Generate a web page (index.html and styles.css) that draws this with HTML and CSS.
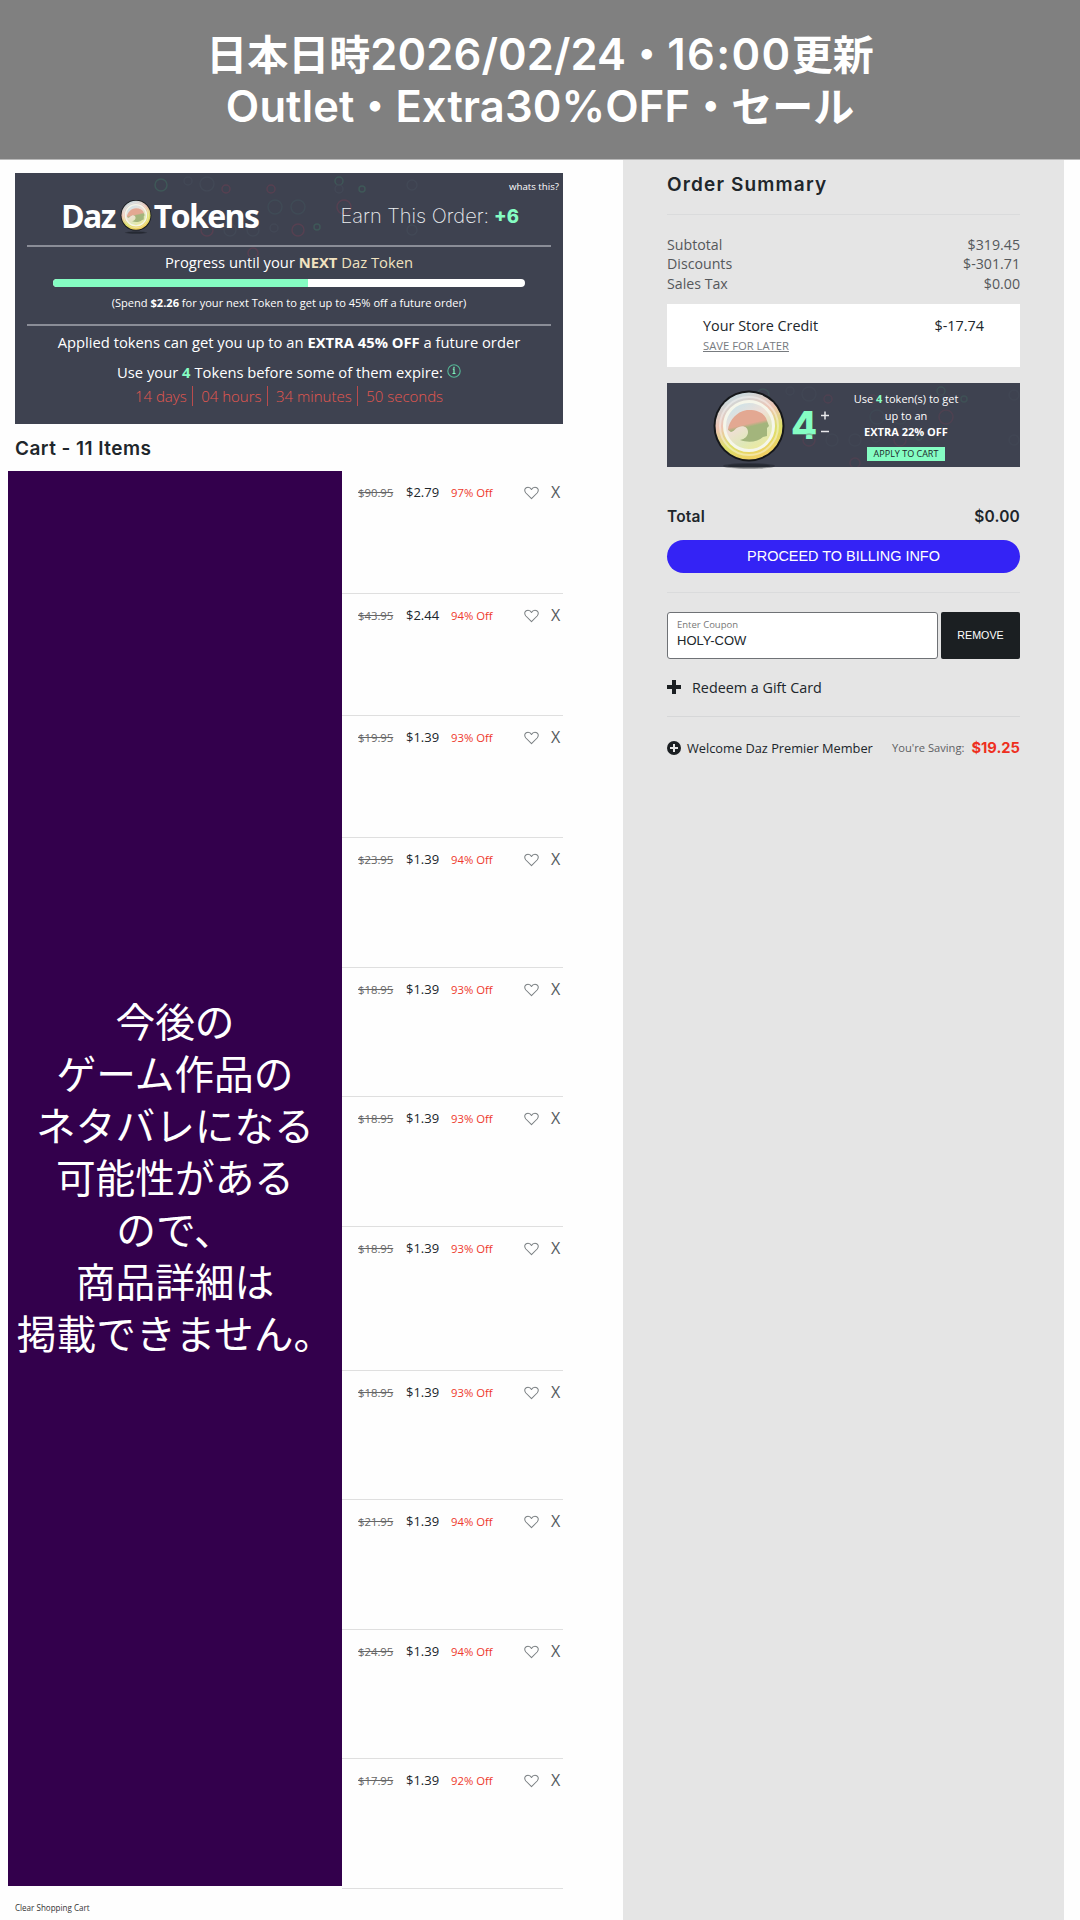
FILE: index.html
```html
<!DOCTYPE html>
<html lang="ja">
<head>
<meta charset="utf-8">
<title>Cart</title>
<link rel="stylesheet" href="styles.css">
</head>
<body>
<svg class="defs" width="0" height="0" aria-hidden="true">
  <defs>
    <linearGradient id="rim" x1="0.2" y1="0" x2="0.6" y2="1"><stop offset="0" stop-color="#c3dfe8"/><stop offset=".4" stop-color="#eec5b4"/><stop offset=".7" stop-color="#dde06a"/><stop offset="1" stop-color="#f2cf62"/></linearGradient>
    <linearGradient id="face" x1="0.1" y1="0" x2="0.7" y2="1"><stop offset="0" stop-color="#c4e4ee"/><stop offset=".45" stop-color="#f0dfd6"/><stop offset=".75" stop-color="#dfe8b8"/><stop offset="1" stop-color="#eee99a"/></linearGradient>
    <linearGradient id="hand" x1="0.3" y1="0" x2="0.6" y2="1"><stop offset=".45" stop-color="#e3a892"/><stop offset=".55" stop-color="#a3b57c"/></linearGradient>
    <symbol id="coin" viewBox="0 0 74 82">
      <ellipse cx="37" cy="77" rx="26" ry="3" fill="#15171c" opacity=".35"/>
      <ellipse cx="37" cy="77" rx="21" ry="2" fill="#15171c" opacity=".35"/>
      <circle cx="37" cy="37" r="35.5" fill="#15171a"/>
      <circle cx="37" cy="37" r="33.5" fill="url(#rim)"/>
      <circle cx="37" cy="37" r="29" fill="none" stroke="#fff" stroke-opacity=".4" stroke-width="2"/>
      <circle cx="37" cy="37" r="24.500" fill="url(#face)" stroke="#f5f6ea" stroke-width="3"/>
      <path d="M16 41C17 31 26 21 37 21c9 0 14 3 17 8l3 8-2 2v8l-4 1c-5 5-15 6-23 3 5-1 8-4 8-8 0-5-5-7-9-5-4 1-4 4-8 5-2-1-2-2-3-2z" fill="url(#hand)"/>
    </symbol>
    <symbol id="heart" viewBox="0 0 16 14"><path d="M8 13 2 7C-.5 4 1.300 .8 4.300 .8 6 .8 7.300 1.800 8 3.300 8.700 1.800 10 .8 11.700 .8c3 0 4.800 3.200 2.300 6.200z" fill="none" stroke="#7b8083" stroke-width="1.100" stroke-linejoin="round"/></symbol>
    <symbol id="rings" viewBox="0 0 290 84">
      <g fill="none" stroke-width="1.500">
        <g stroke="#3f6a5f"><circle cx="21" cy="12" r="6"/><circle cx="199" cy="8" r="4"/><circle cx="222" cy="16" r="3"/><circle cx="177" cy="54" r="3"/></g>
        <g stroke="#41525b"><circle cx="135" cy="34" r="7"/><circle cx="158" cy="34" r="7"/></g>
        <g stroke="#6b4052"><circle cx="86" cy="16" r="4"/><circle cx="131" cy="16" r="4"/><circle cx="67" cy="57" r="6"/><circle cx="158" cy="57" r="6"/><circle cx="113" cy="80" r="5"/><circle cx="204" cy="34" r="7"/></g>
        <g stroke="#464e5b"><circle cx="67" cy="11" r="7"/><circle cx="48" cy="8" r="4"/><circle cx="90" cy="57" r="6"/><circle cx="113" cy="57" r="6"/><circle cx="134" cy="55" r="4"/><circle cx="199" cy="16" r="4"/><circle cx="272" cy="12" r="5"/><circle cx="272" cy="57" r="5"/></g>
      </g>
    </symbol>
  </defs>
</svg>
<header class="notice">
  <div>日本日時<b class="latin">2026/02/24</b>・<b class="latin wide">16:00</b>更新</div>
  <div><b class="latin">Outlet</b>・<b class="latin">Extra30%OFF</b>・セール</div>
</header>
<main class="page">
  <section class="cart">
    <div class="tokens">
      <svg class="rings"><use href="#rings"/></svg>
      <a class="whats">whats this?</a>
      <div class="tokens-head">
        <span class="brand">Daz</span><svg class="brand-coin"><use href="#coin"/></svg><span class="brand">Tokens</span>
        <span class="earn">Earn This Order:</span><span class="earned">+6</span>
      </div>
      <div class="tokens-progress">
        <p class="progress-title">Progress until your <span class="gold"><b>NEXT</b> Daz Token</span></p>
        <div class="bar"><div class="bar-fill" style="width:54%"></div></div>
        <p class="spend">(Spend <b>$2.26</b> for your next Token to get up to 45% off a future order)</p>
      </div>
      <div class="tokens-foot">
        <p class="applied">Applied tokens can get you up to an <b>EXTRA 45% OFF</b> a future order</p>
        <p class="expire"><span>Use your <b class="mint">4</b> Tokens before some of them expire:</span>
          <svg class="info" viewBox="0 0 14 14"><circle cx="7" cy="7" r="6.200" fill="none" stroke="#55b796" stroke-width="1.100"/><path d="M7 2.800v1.500M5.800 5.200H7V9.500M5.500 9.500h3" fill="none" stroke="#7ff5bd" stroke-width="1.200"/></svg></p>
        <p class="countdown"><span>14 days</span><span>04 hours</span><span>34 minutes</span><span>50 seconds</span></p>
      </div>
    </div>
    <h1 class="cart-title">Cart - 11 Items</h1>
    <div class="cart-body">
      <div class="cover"><p>今後の</p><p>ゲーム作品の</p><p>ネタバレになる</p><p>可能性がある</p><p>ので、</p><p>商品詳細は</p><p>掲載できません。</p></div>
      <ul class="items" id="items"></ul>
    </div>
    <a class="clear">Clear Shopping Cart</a>
  </section>
  <aside class="summary">
    <h2 class="summary-title">Order Summary</h2>
    <dl class="amounts">
      <div><dt>Subtotal</dt><dd>$319.45</dd></div>
      <div><dt>Discounts</dt><dd>$-301.71</dd></div>
      <div><dt>Sales Tax</dt><dd>$0.00</dd></div>
    </dl>
    <div class="credit">
      <div class="credit-row"><span>Your Store Credit</span><span>$-17.74</span></div>
      <a class="save">SAVE FOR LATER</a>
    </div>
    <div class="apply">
      <svg class="rings apply-rings"><use href="#rings"/></svg>
      <svg class="apply-coin"><use href="#coin"/></svg>
      <span class="count">4</span>
      <span class="stepper"><svg viewBox="0 0 8 24"><path d="M0 4.500h8M4 .5v8M0 20.500h8" stroke="#e8e8ea" stroke-width="1.500"/></svg></span>
      <div class="apply-copy">
        <span>Use <b class="mint">4</b> token(s) to get</span><span>up to an</span><b>EXTRA 22% OFF</b>
        <button class="apply-btn">APPLY TO CART</button>
      </div>
    </div>
    <div class="total"><span>Total</span><span>$0.00</span></div>
    <button class="proceed">PROCEED TO BILLING INFO</button>
    <div class="coupon">
      <div class="coupon-field"><label>Enter Coupon</label><span>HOLY-COW</span></div>
      <button class="remove">REMOVE</button>
    </div>
    <a class="gift"><svg viewBox="0 0 14 14"><path d="M5 0h4v5h5v4H9v5H5V9H0V5h5z" fill="#1b1f22"/></svg><span>Redeem a Gift Card</span></a>
    <div class="premier">
      <svg viewBox="0 0 14 14"><circle cx="7" cy="7" r="7" fill="#1b1f22"/><path d="M7 3v8M3 7h8" stroke="#e5e5e5" stroke-width="2"/></svg>
      <span class="welcome">Welcome Daz Premier Member</span><span class="saving">You're Saving:</span><span class="saved">$19.25</span>
    </div>
  </aside>
</main>
<script src="items.js"></script>
</body>
</html>
```
FILE: items.js
```js
const items = [
  ["$90.95", "$2.79", "97%", "short first"],
  ["$43.95", "$2.44", "94%", "short"],
  ["$19.95", "$1.39", "93%", "short"],
  ["$23.95", "$1.39", "94%", ""],
  ["$18.95", "$1.39", "93%", ""],
  ["$18.95", "$1.39", "93%", ""],
  ["$18.95", "$1.39", "93%", "tall"],
  ["$18.95", "$1.39", "93%", ""],
  ["$21.95", "$1.39", "94%", ""],
  ["$24.95", "$1.39", "94%", ""],
  ["$17.95", "$1.39", "92%", ""],
];

document.getElementById("items").innerHTML = items.map(([was, price, off, size]) => `
  <li class="item ${size}">
    <s class="was">${was}</s>
    <span class="price">${price}</span>
    <span class="off">${off} Off</span>
    <svg class="heart"><use href="#heart"/></svg>
    <span class="x">X</span>
  </li>`).join("");
```
FILE: styles.css
```css
* { box-sizing: border-box; }
body, h1, h2, p, ul, dl, dd { margin: 0; padding: 0; }
body { width: 1080px; height: 1920px; overflow: hidden; background: #fefefe; font-family: "Open Sans", "Noto Sans CJK JP", sans-serif; color: #20262b; }
button { border: 0; padding: 0; }
.defs { position: absolute; }

.notice { height: 159px; padding-bottom: 3px; background: #808080; color: #fff; display: flex; flex-direction: column; align-items: center; justify-content: center; font: bold 41px/52px "Noto Sans CJK JP", sans-serif; }
.notice div { height: 52px; white-space: nowrap; }
.latin { font: 600 43.500px/52px Inter, sans-serif; letter-spacing: .1px; }
.latin.wide { letter-spacing: 1.400px; }

.page { display: flex; height: 1761px; border-top: 1px solid #b9b9b9; }
.cart { width: 623px; padding: 13px 0 0 15px; }

.tokens { position: relative; width: 548px; height: 251px; padding: 0 12px; background: #3e4250; color: #fff; }
.rings { position: absolute; left: 125px; top: 0; width: 290px; height: 84px; opacity: .55; }
.whats { display: flex; justify-content: flex-end; height: 21px; margin-right: -8px; font-size: 9.700px; line-height: 28px; }
.tokens-head { display: flex; align-items: center; height: 44px; margin-bottom: 7px; padding-left: 34px; }
.tokens-head > * { position: relative; white-space: nowrap; }
.brand { font-size: 32px; line-height: 44px; font-weight: 700; letter-spacing: -1.600px; }
.brand-coin { width: 32px; height: 36px; margin: 2px 2px 0 5px; }
.earn { margin-left: auto; font: 200 20px/44px Inter, sans-serif; color: #eceef0; }
.earned { margin: 0 32px 0 5px; font: 800 18.500px/44px Inter, sans-serif; color: #85fdc3; }
.tokens-progress { height: 79px; border-top: 2px solid #8a8d97; text-align: center; }
.progress-title { height: 32px; font-size: 14.750px; line-height: 30px; }
.gold { color: #f1e2c0; }
.bar { height: 8px; margin: 0 26px; border-radius: 4px; background: #fff; overflow: hidden; }
.bar-fill { height: 8px; background: #85fdc3; }
.spend { font-size: 11.080px; line-height: 32px; }
.tokens-foot { border-top: 2px solid #8a8d97; text-align: center; }
.applied { font-size: 14.750px; line-height: 32px; }
.expire { display: flex; justify-content: center; align-items: center; gap: 4px; font-size: 14.750px; line-height: 28px; }
.info { width: 14px; height: 14px; margin-top: -2px; }
.mint { color: #85fdc3; }
.countdown { display: flex; justify-content: center; font-size: 15px; line-height: 20px; font-weight: 300; color: #e4574f; }
.countdown span + span { margin-left: 5px; padding-left: 8.500px; border-left: 1px solid #b94b4c; }

.cart-title { height: 47px; font: 600 19px/49px Inter, sans-serif; letter-spacing: .45px; }
.cart-body { display: flex; width: 555px; height: 1418px; margin-left: -7px; }
.cover { width: 334px; height: 1415px; padding-bottom: 6px; background: #33004c; color: #fff; display: flex; flex-direction: column; align-items: center; justify-content: center; font: 39.700px/52px "Noto Sans CJK JP", sans-serif; white-space: nowrap; }
.items { flex: 1; list-style: none; }
.item { display: flex; height: 129.500px; padding-left: 16px; border-bottom: 1px solid #dfdfdf; line-height: 43px; }
.item.short { height: 122px; }
.item.short.first { height: 123px; }
.item.tall { height: 144px; }
.was { width: 48px; font-size: 11.300px; color: #666; }
.price { width: 45px; font-size: 13px; }
.off { width: 73px; font-size: 11.300px; color: #ee3a2d; }
.heart { width: 15px; height: 14px; margin-top: 15px; }
.x { margin-left: 12px; font-size: 16px; color: #555b60; }
.clear { display: block; font-size: 8.050px; line-height: 37px; color: #333; }

.summary { width: 441px; padding: 0 44px; background: #e5e5e5; }
.summary-title { height: 55px; border-bottom: 1px solid #dadbdc; font: 600 19px/50px Inter, sans-serif; letter-spacing: 1.150px; }
.amounts { padding-top: 20px; font-size: 14.200px; line-height: 19.300px; color: #55585b; }
.amounts div, .credit-row, .total { display: flex; justify-content: space-between; }
.credit { height: 63px; margin-top: 11px; padding: 12px 36px; background: #fff; font-size: 14.400px; line-height: 20px; }
.save { display: block; font-size: 11.250px; color: #777b7f; text-decoration: underline; }
.apply { position: relative; display: flex; height: 84px; margin-top: 16px; padding-left: 45px; background: #3e4250; color: #fff; }
.apply-rings { left: 75px; opacity: .35; }
.apply-coin { position: relative; width: 74px; height: 82px; margin-top: 6px; flex: none; }
.count { width: 30px; margin-left: 5px; font: 800 38px/84px Inter, sans-serif; color: #85fdc3; }
.stepper svg { display: block; width: 8px; height: 24px; margin-top: 28px; }
.apply-copy { position: relative; width: 130px; margin: 8px 0 0 12px; display: flex; flex-direction: column; align-items: center; font-size: 11px; line-height: 16.700px; }
.apply-btn { width: 78px; height: 14px; margin-top: 6px; background: #85fdc3; color: #20262b; font: 9px/14px "Open Sans", sans-serif; }
.total { padding-top: 32px; font: 600 15.500px/36px Inter, sans-serif; letter-spacing: .2px; }
.proceed { display: block; width: 353px; height: 33px; margin-top: 5px; border-radius: 17px; background: #3423f5; color: #fff; font: 14.450px/31px "Liberation Sans", sans-serif; }
.coupon { display: flex; gap: 3px; margin-top: 19px; padding-top: 19px; border-top: 1px solid #dadbdc; }
.coupon-field { width: 271px; height: 47px; padding: 4px 9px; border: 1px solid #6f7276; border-radius: 3px; background: #fff; display: flex; flex-direction: column; font: 13px/18px "Liberation Sans", sans-serif; align-items: flex-start; }
.coupon-field label { font: 9.500px/15px "Open Sans", sans-serif; color: #777; }
.remove { width: 79px; height: 47px; border-radius: 2px; background: #1b1f22; color: #fff; font: 10.700px "Liberation Sans", sans-serif; }
.gift { display: flex; align-items: center; gap: 11px; height: 58px; border-bottom: 1px solid #d6d7d8; font-size: 14.350px; }
.gift svg, .premier svg { width: 14px; height: 14px; flex: none; }
.premier { display: flex; align-items: center; height: 62px; font-size: 12.800px; white-space: nowrap; }
.welcome { margin-left: 6px; }
.saving { margin-left: auto; font-size: 11.150px; color: #5d6063; }
.saved { margin-left: 7px; font: 700 14.700px Inter, sans-serif; color: #ee2f20; }
```
